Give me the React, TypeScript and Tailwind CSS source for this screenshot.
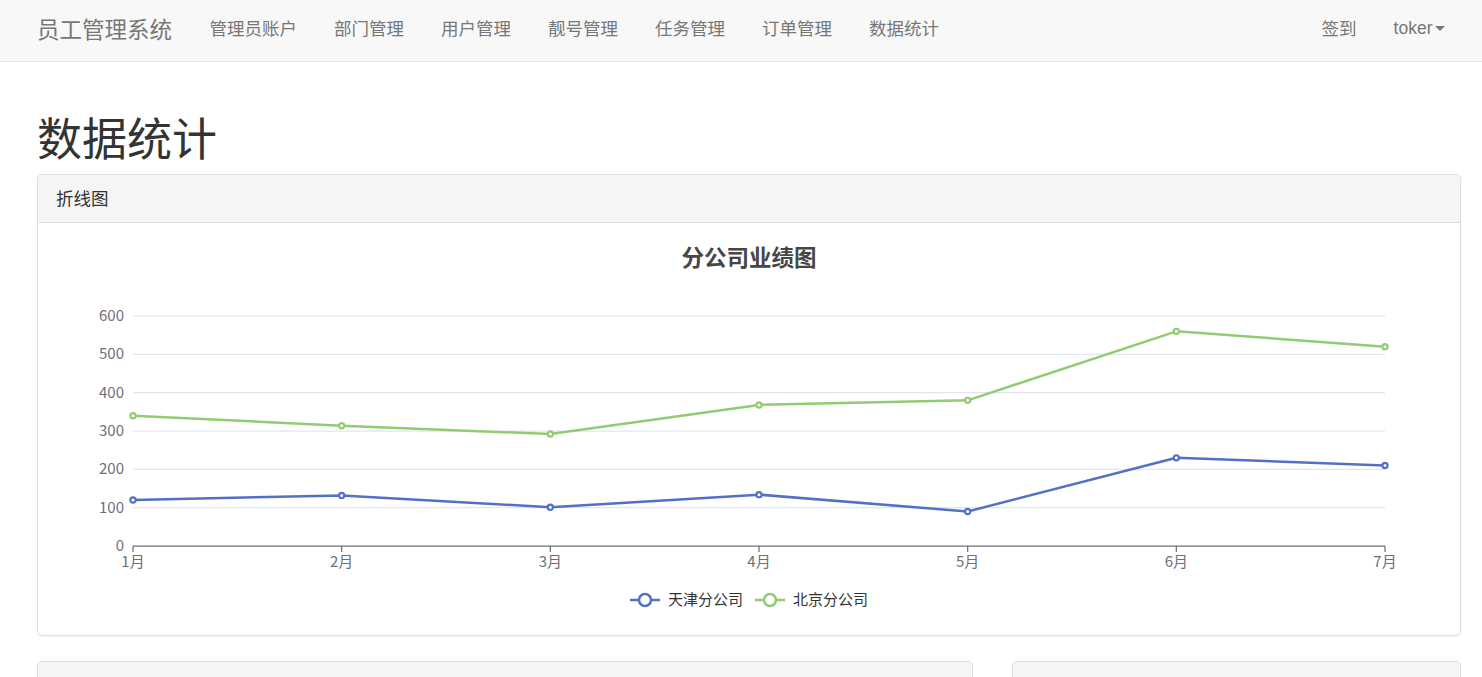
import React from 'react';

const navItems = ['管理员账户', '部门管理', '用户管理', '靓号管理', '任务管理', '订单管理', '数据统计'];

const months = ['1月', '2月', '3月', '4月', '5月', '6月', '7月'];
const tianjin = [120, 132, 101, 134, 90, 230, 210];
const beijing = [220, 182, 191, 234, 290, 330, 310];

// chart geometry (px inside the 375px-high chart box)
const X0 = 76;
const X1 = 1328;
const Y0 = 305;
const UNIT = 230 / 600;
const px = (i: number) => X0 + (i * (X1 - X0)) / 6;
const py = (v: number) => Y0 - v * UNIT;

const FONT = '"Microsoft YaHei", "Noto Sans CJK SC", "Liberation Sans", sans-serif';

const Series = ({ data, color }: { data: number[]; color: string }) => {
  const pts = data.map((v, i) => `${px(i)},${py(v)}`).join(' ');
  return (
    <g>
      <polyline points={pts} fill="none" stroke={color} strokeWidth={2.5} strokeLinejoin="round" />
      {data.map((v, i) => (
        <circle key={i} cx={px(i)} cy={py(v)} r={2.6} fill="#fff" stroke={color} strokeWidth={2.2} />
      ))}
    </g>
  );
};

const LineChart = () => {
  const stacked = beijing.map((v, i) => v + tianjin[i]);
  return (
    <svg width="1385" height="375" viewBox="0 0 1385 375" style={{ fontFamily: FONT }}>
      <text x={692} y={15} textAnchor="middle" dominantBaseline="central" fontSize="22.5" fontWeight="bold" fill="#464646">
        分公司业绩图
      </text>
      {[0, 100, 200, 300, 400, 500, 600].map((v) => (
        <g key={v}>
          {v > 0 && <line x1={X0} x2={X1} y1={py(v)} y2={py(v)} stroke="#E0E6F1" strokeWidth={1.25} />}
          <text x={67} y={py(v) - 1.5} textAnchor="end" dominantBaseline="central" fontSize="15" fill="#6E7079">
            {v}
          </text>
        </g>
      ))}
      <line x1={X0} x2={X1} y1={Y0} y2={Y0} stroke="#6E7079" strokeWidth={1.25} />
      {months.map((m, i) => (
        <g key={m}>
          <line x1={px(i)} x2={px(i)} y1={Y0} y2={Y0 + 6} stroke="#6E7079" strokeWidth={1.25} />
          <text x={px(i)} y={319} textAnchor="middle" dominantBaseline="central" fontSize="15" fill="#6E7079">
            {m}
          </text>
        </g>
      ))}
      <Series data={stacked} color="#91cc75" />
      <Series data={tianjin} color="#5470c6" />

      {/* legend */}
      <line x1={573} x2={603} y1={359} y2={359} stroke="#5470c6" strokeWidth={2.5} />
      <circle cx={588} cy={359} r={6} fill="#fff" stroke="#5470c6" strokeWidth={2.5} />
      <text x={611} y={357.5} dominantBaseline="central" fontSize="15" fill="#333">
        天津分公司
      </text>
      <line x1={698} x2={728} y1={359} y2={359} stroke="#91cc75" strokeWidth={2.5} />
      <circle cx={713} cy={359} r={6} fill="#fff" stroke="#91cc75" strokeWidth={2.5} />
      <text x={736} y={357.5} dominantBaseline="central" fontSize="15" fill="#333">
        北京分公司
      </text>
    </svg>
  );
};

const PanelHeading = ({ children }: { children: React.ReactNode }) => (
  <div className="h-[48px] px-[18px] flex items-center bg-[#f5f5f5] border-b border-[#dddddd] rounded-t-[5px] text-[17.5px] text-[#333333]">
    {children}
  </div>
);

export default function App() {
  return (
    <div className="min-h-screen bg-white overflow-hidden" style={{ fontFamily: FONT }}>
      <nav className="h-[62px] pb-[4px] bg-[#f8f8f8] border-b border-[#e7e7e7] flex items-center pl-[18px] pr-[19px]">
        <a className="px-[19px] text-[22.5px] text-[#777777] leading-none">员工管理系统</a>
        <ul className="flex items-center">
          {navItems.map((item) => (
            <li key={item} className="px-[18.5px] text-[17.5px] text-[#777777]">
              {item}
            </li>
          ))}
        </ul>
        <ul className="ml-auto flex items-center">
          <li className="px-[18.5px] text-[17.5px] text-[#777777]">签到</li>
          <li className="px-[18.5px] text-[17.5px] text-[#777777] flex items-center" style={{ fontFamily: '"Liberation Sans", Arial, sans-serif' }}>
            toker
            <span className="ml-[2px] w-0 h-0 border-l-[5px] border-r-[5px] border-t-[5px] border-l-transparent border-r-transparent border-t-[#777777]" />
          </li>
        </ul>
      </nav>

      <div className="pl-[37px] pr-[21px]">
        <h1 className="mt-[50px] mb-[12px] text-[45px] leading-[50px] text-[#333333]">数据统计</h1>

        <div className="border border-[#dddddd] rounded-[5px] shadow-[0_1px_1px_rgba(0,0,0,0.05)]">
          <PanelHeading>折线图</PanelHeading>
          <div className="p-[18.75px] pt-[18px]">
            <LineChart />
          </div>
        </div>

        <div className="mt-[25px] flex gap-[39px]">
          <div className="w-[936px] border border-[#dddddd] rounded-[5px]">
            <PanelHeading>柱状图</PanelHeading>
            <div className="h-[300px]" />
          </div>
          <div className="flex-1 border border-[#dddddd] rounded-[5px]">
            <PanelHeading>饼图</PanelHeading>
            <div className="h-[300px]" />
          </div>
        </div>
      </div>
    </div>
  );
}
